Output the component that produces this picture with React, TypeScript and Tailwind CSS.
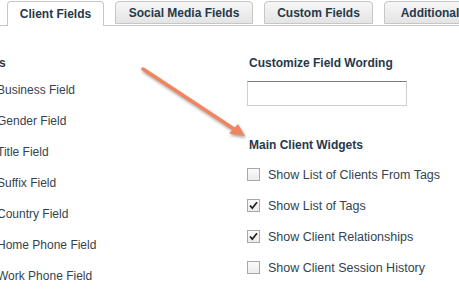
import React from 'react';

const tabs = [
  { label: 'Client Fields', w: 'w-[97px]' },
  { label: 'Social Media Fields', w: 'w-[138px]' },
  { label: 'Custom Fields', w: 'w-[109px]' },
  { label: 'Additional Fields', w: 'w-[130px]' },
];

const hiddenFields = [
  'Business Field',
  'Gender Field',
  'Title Field',
  'Suffix Field',
  'Country Field',
  'Home Phone Field',
  'Work Phone Field',
];

const widgets = [
  { label: 'Show List of Clients From Tags', checked: false },
  { label: 'Show List of Tags', checked: true },
  { label: 'Show Client Relationships', checked: true },
  { label: 'Show Client Session History', checked: false },
];

function Checkbox({ checked }: { checked: boolean }) {
  return (
    <div className="w-[13px] h-[13px] shrink-0 border border-[#a8a8a8] bg-gradient-to-b from-[#fbfbfb] to-[#ececec] flex items-center justify-center">
      {checked && (
        <svg width="11" height="11" viewBox="0 0 11 11">
          <path d="M2 5.5 L4.3 8.2 L9 2.3" fill="none" stroke="#222" strokeWidth="1.8" />
        </svg>
      )}
    </div>
  );
}

export default function App() {
  return (
    <div className="relative w-[459px] h-[291px] overflow-hidden bg-white text-[12px] text-[#34444f]" style={{ fontFamily: '"Liberation Sans", Arial, sans-serif' }}>
      {/* Tabs */}
      <div className="flex items-end gap-[11px] pl-[7px] h-[26px] border-b border-[#c6c6c6]">
        {tabs.map((t, i) =>
          i === 0 ? (
            <div key={t.label} className={`${t.w} shrink-0 h-[25px] mb-[-1px] pt-[3px] text-center bg-white border border-b-0 border-[#c6c6c6] rounded-t-[4px] font-bold text-[#26394a] whitespace-nowrap`}>
              {t.label}
            </div>
          ) : (
            <div key={t.label} className={`${t.w} shrink-0 h-[23px] mb-[1px] pt-[2px] text-center bg-gradient-to-b from-[#f7f7f7] to-[#e4e4e4] border border-[#c6c6c6] rounded-t-[4px] font-bold text-[#26394a] whitespace-nowrap`}>
              {t.label}
            </div>
          )
        )}
      </div>

      <div className="flex">
        {/* Left column */}
        <div className="w-[250px] shrink-0 ml-[-3px]">
          <div className="mt-[28px] ml-[-26px] font-bold text-[#26394a] h-[16px]">Fields</div>
          <div className="flex flex-col mt-[12px] gap-[15px]">
            {hiddenFields.map((f) => (
              <div key={f} className="h-[16px] leading-[16px]">{f}</div>
            ))}
          </div>
        </div>

        {/* Right column */}
        <div className="flex flex-col">
          <div className="mt-[28px] ml-[2px] font-bold text-[#26394a] h-[16px]">Customize Field Wording</div>
          <div className="mt-[11px] w-[160px] h-[25px] border border-[#cfcfcf] border-t-[#7a7a7a] bg-white" />
          <div className="mt-[30px] ml-[2px] font-bold text-[#26394a] h-[16px]">Main Client Widgets</div>
          <div className="flex flex-col mt-[7px]">
            {widgets.map((w) => (
              <div key={w.label} className="flex items-center gap-[8px] h-[31px]">
                <Checkbox checked={w.checked} />
                <span className="leading-[16px] text-[12.5px] whitespace-nowrap">{w.label}</span>
              </div>
            ))}
          </div>
        </div>
      </div>

      {/* Arrow annotation */}
      <svg className="absolute left-0 top-0 pointer-events-none" width="459" height="291" style={{ filter: 'drop-shadow(1px 2px 1.5px rgba(0,0,0,0.35))' }}>
        <line x1="143" y1="69" x2="234" y2="129" stroke="#f2845e" strokeWidth="3.5" strokeLinecap="round" />
        <path d="M245 136 L229 133.5 L238 124 Z" fill="#f2845e" />
      </svg>
    </div>
  );
}
